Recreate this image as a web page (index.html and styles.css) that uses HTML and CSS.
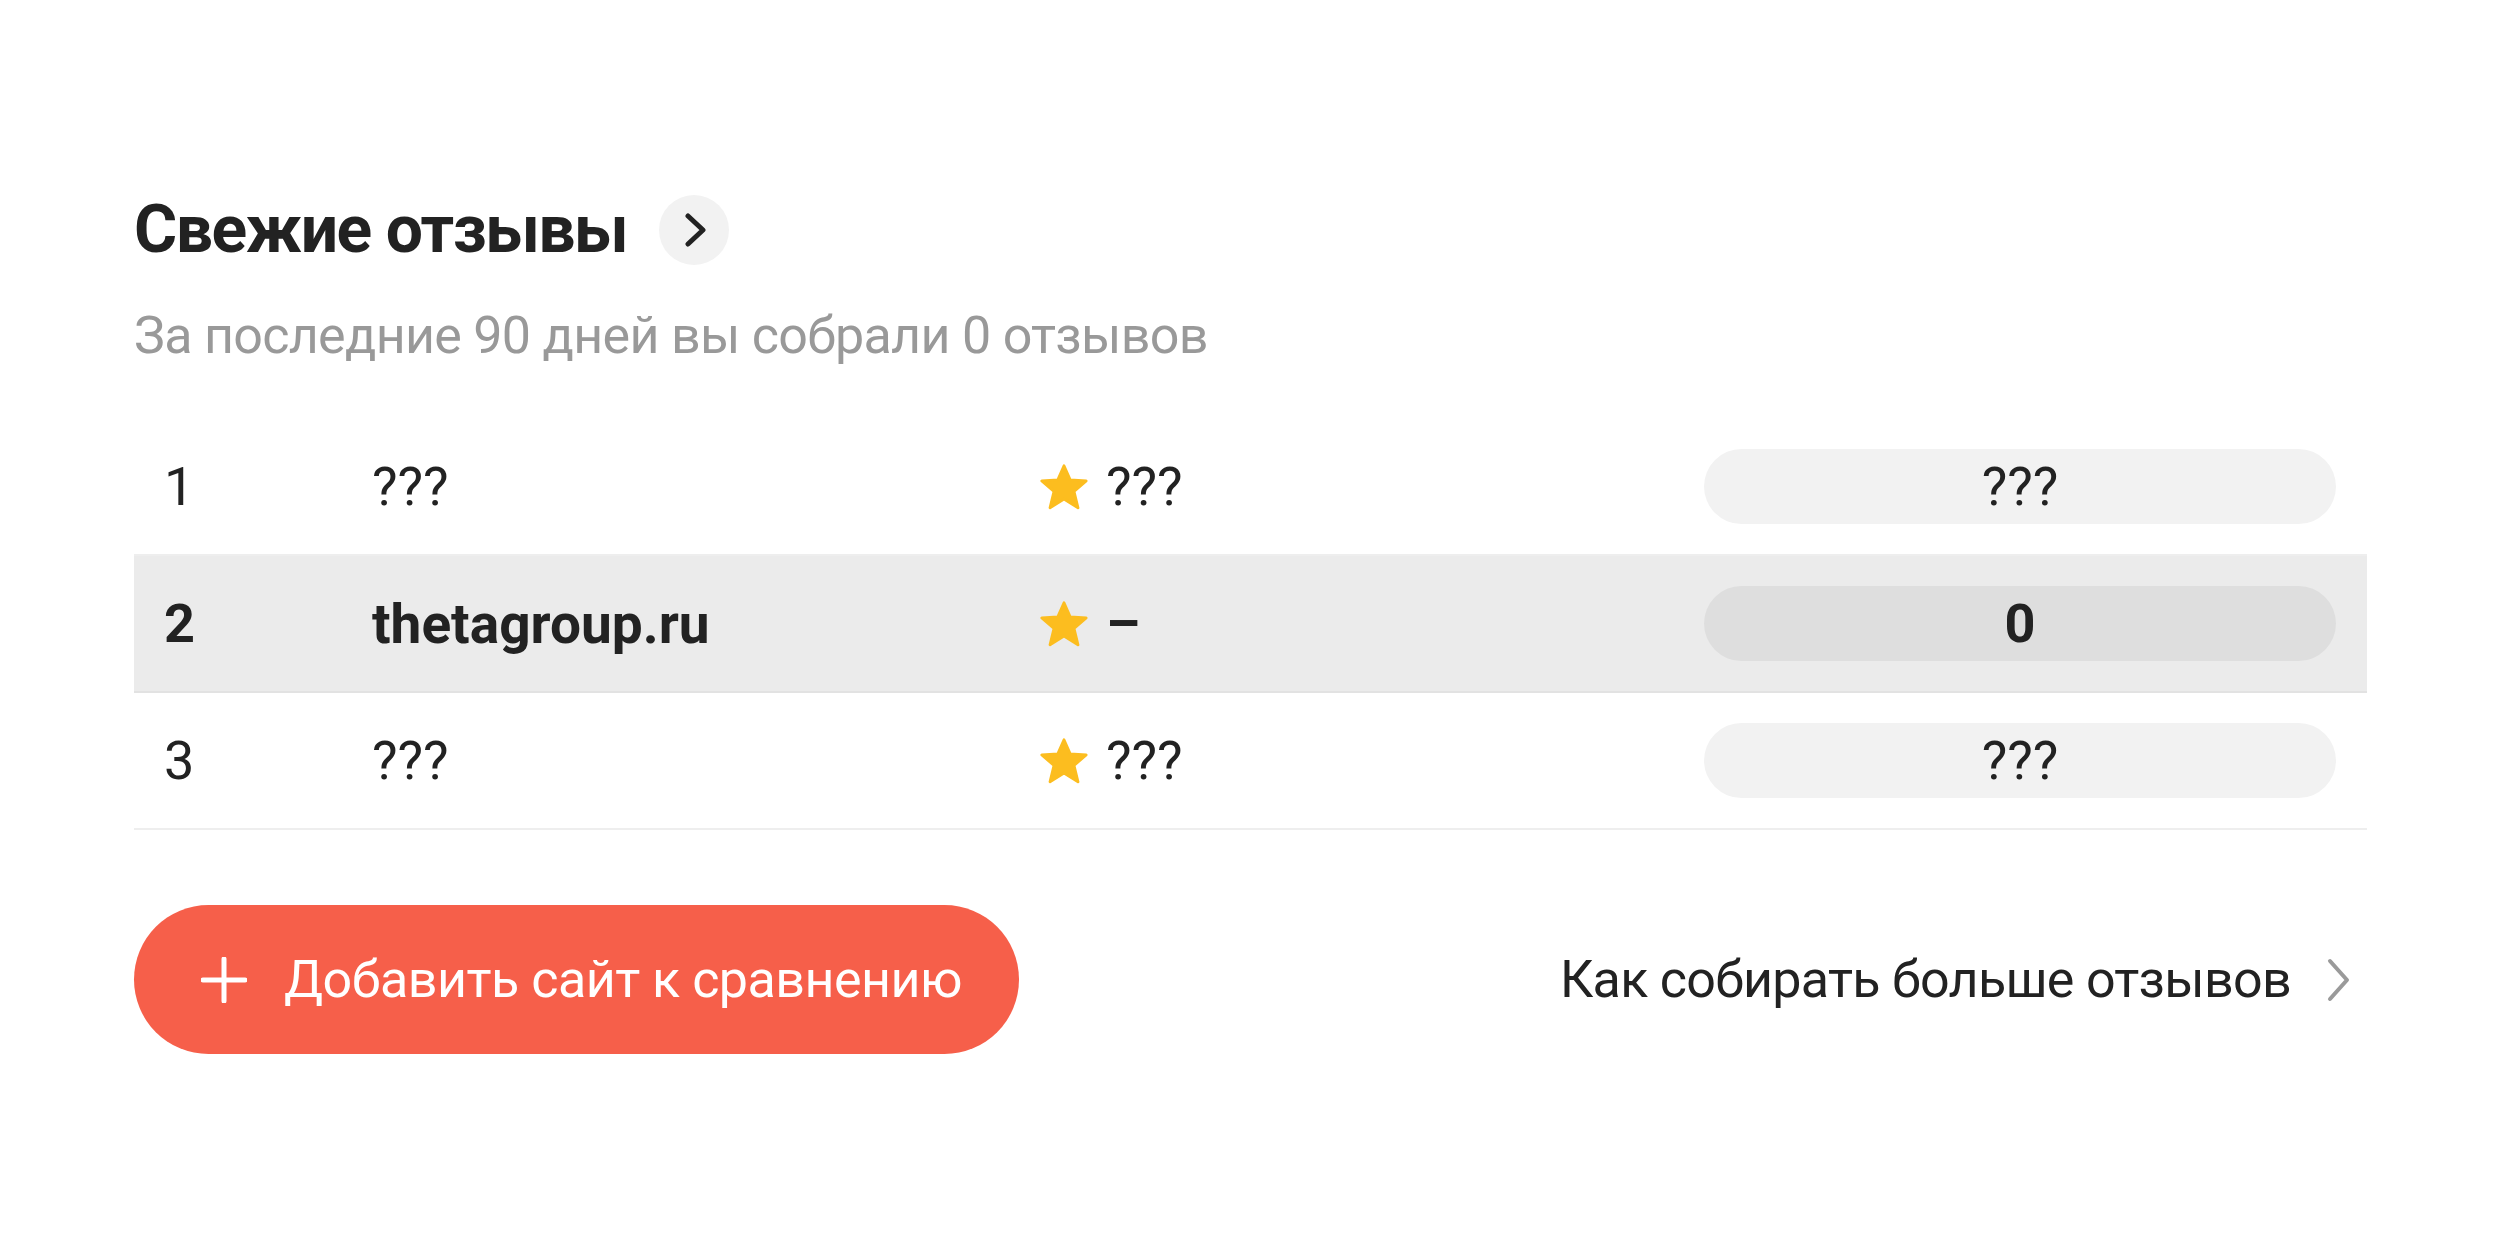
FILE: index.html
```html
<!DOCTYPE html>
<html lang="ru">
<head>
<meta charset="utf-8">
<title>Свежие отзывы</title>
<link rel="stylesheet" href="styles.css">
</head>
<body>
<div class="page">
  <div class="header">
    <h1 class="title">Свежие отзывы</h1>
    <span class="circle-btn">
      <svg width="22" height="34" viewBox="0 0 22 34"><path d="M3 3 L18 17 L3 31" fill="none" stroke="#222" stroke-width="5" stroke-linecap="round" stroke-linejoin="round"/></svg>
    </span>
  </div>
  <p class="subtitle">За последние 90 дней вы собрали 0 отзывов</p>

  <div class="table">
    <div class="row">
      <span class="num">1</span>
      <span class="name">???</span>
      <span class="rating"><svg class="star" width="48" height="46" viewBox="0 0 24 23"><path d="M12 0.9 L15.1 7.9 L23.1 8.5 L17 13.7 L19 21.9 L12 17.5 L5 21.9 L7 13.7 L0.9 8.5 L8.9 7.9 Z" fill="#fcbd1f" stroke="#fcbd1f" stroke-width="1.4" stroke-linejoin="round"/></svg><span>???</span></span>
      <span class="pill">???</span>
    </div>
    <div class="row current">
      <span class="num">2</span>
      <span class="name">thetagroup.ru</span>
      <span class="rating"><svg class="star" width="48" height="46" viewBox="0 0 24 23"><path d="M12 0.9 L15.1 7.9 L23.1 8.5 L17 13.7 L19 21.9 L12 17.5 L5 21.9 L7 13.7 L0.9 8.5 L8.9 7.9 Z" fill="#fcbd1f" stroke="#fcbd1f" stroke-width="1.4" stroke-linejoin="round"/></svg><span>–</span></span>
      <span class="pill">0</span>
    </div>
    <div class="row">
      <span class="num">3</span>
      <span class="name">???</span>
      <span class="rating"><svg class="star" width="48" height="46" viewBox="0 0 24 23"><path d="M12 0.9 L15.1 7.9 L23.1 8.5 L17 13.7 L19 21.9 L12 17.5 L5 21.9 L7 13.7 L0.9 8.5 L8.9 7.9 Z" fill="#fcbd1f" stroke="#fcbd1f" stroke-width="1.4" stroke-linejoin="round"/></svg><span>???</span></span>
      <span class="pill">???</span>
    </div>
  </div>

  <div class="footer">
    <button class="add-btn" type="button">
      <svg width="46" height="46" viewBox="0 0 46 46"><path d="M23 2 V44 M2 23 H44" stroke="#fff" stroke-width="5" stroke-linecap="round"/></svg>
      <span>Добавить сайт к сравнению</span>
    </button>
    <a class="more-link" href="#">
      <span>Как собирать больше отзывов</span>
      <svg width="24" height="44" viewBox="0 0 24 44"><path d="M3 3 L20 22 L3 41" fill="none" stroke="#9a9a9a" stroke-width="4" stroke-linecap="round" stroke-linejoin="round"/></svg>
    </a>
  </div>
</div>
</body>
</html>
```
FILE: styles.css
```css
html, body {
  margin: 0;
  background: #ffffff;
}

body {
  font-family: Roboto, "Liberation Sans", Arial, sans-serif;
  color: #222222;
}

.page {
  width: 2233px;
  padding: 190px 0 0 134px;
}

.header {
  display: flex;
  align-items: center;
  gap: 32px;
}

.title {
  margin: 0;
  font-size: 66px;
  line-height: 80px;
  font-weight: 700;
  letter-spacing: -1.5px;
  color: #222222;
}

.circle-btn {
  width: 70px;
  height: 70px;
  border-radius: 50%;
  background: #f2f2f2;
  display: flex;
  align-items: center;
  justify-content: center;
}

.circle-btn svg {
  margin-left: 4px;
}

.subtitle {
  margin: 34px 0 0;
  font-size: 52px;
  line-height: 64px;
  letter-spacing: -0.7px;
  color: #999999;
}

.table {
  margin-top: 51px;
}

.row {
  display: grid;
  grid-template-columns: 208px 668px 664px 632px;
  align-items: center;
  height: 137px;
  box-sizing: border-box;
  padding-left: 30px;
  border-bottom: 2px solid #eeeeee;
  font-size: 54px;
  line-height: 64px;
  color: #222222;
}

.row.current {
  background: #ebebeb;
  font-weight: 700;
  border-bottom-color: #e2e2e2;
}

.row.current .name {
  font-size: 55px;
}

.rating {
  display: flex;
  align-items: center;
  gap: 18px;
}

.star {
  display: block;
  flex: none;
}

.pill {
  height: 75px;
  border-radius: 38px;
  background: #f2f2f2;
  display: flex;
  align-items: center;
  justify-content: center;
}

.row.current .pill {
  background: #dedede;
}

.footer {
  margin-top: 75px;
  display: flex;
  align-items: center;
  justify-content: space-between;
}

.add-btn {
  height: 149px;
  border: 0;
  border-radius: 75px;
  background: #f65f4a;
  color: #ffffff;
  padding: 0 57px 0 67px;
  display: flex;
  align-items: center;
  gap: 37px;
  font-family: Roboto, "Liberation Sans", Arial, sans-serif;
  font-size: 52px;
  line-height: 64px;
  letter-spacing: -0.5px;
  cursor: pointer;
}

.add-btn svg {
  display: block;
}

.more-link {
  display: flex;
  align-items: center;
  gap: 36px;
  margin-right: 16px;
  color: #222222;
  text-decoration: none;
  font-size: 52px;
  line-height: 64px;
  letter-spacing: -0.7px;
}

.more-link svg {
  display: block;
}
```
